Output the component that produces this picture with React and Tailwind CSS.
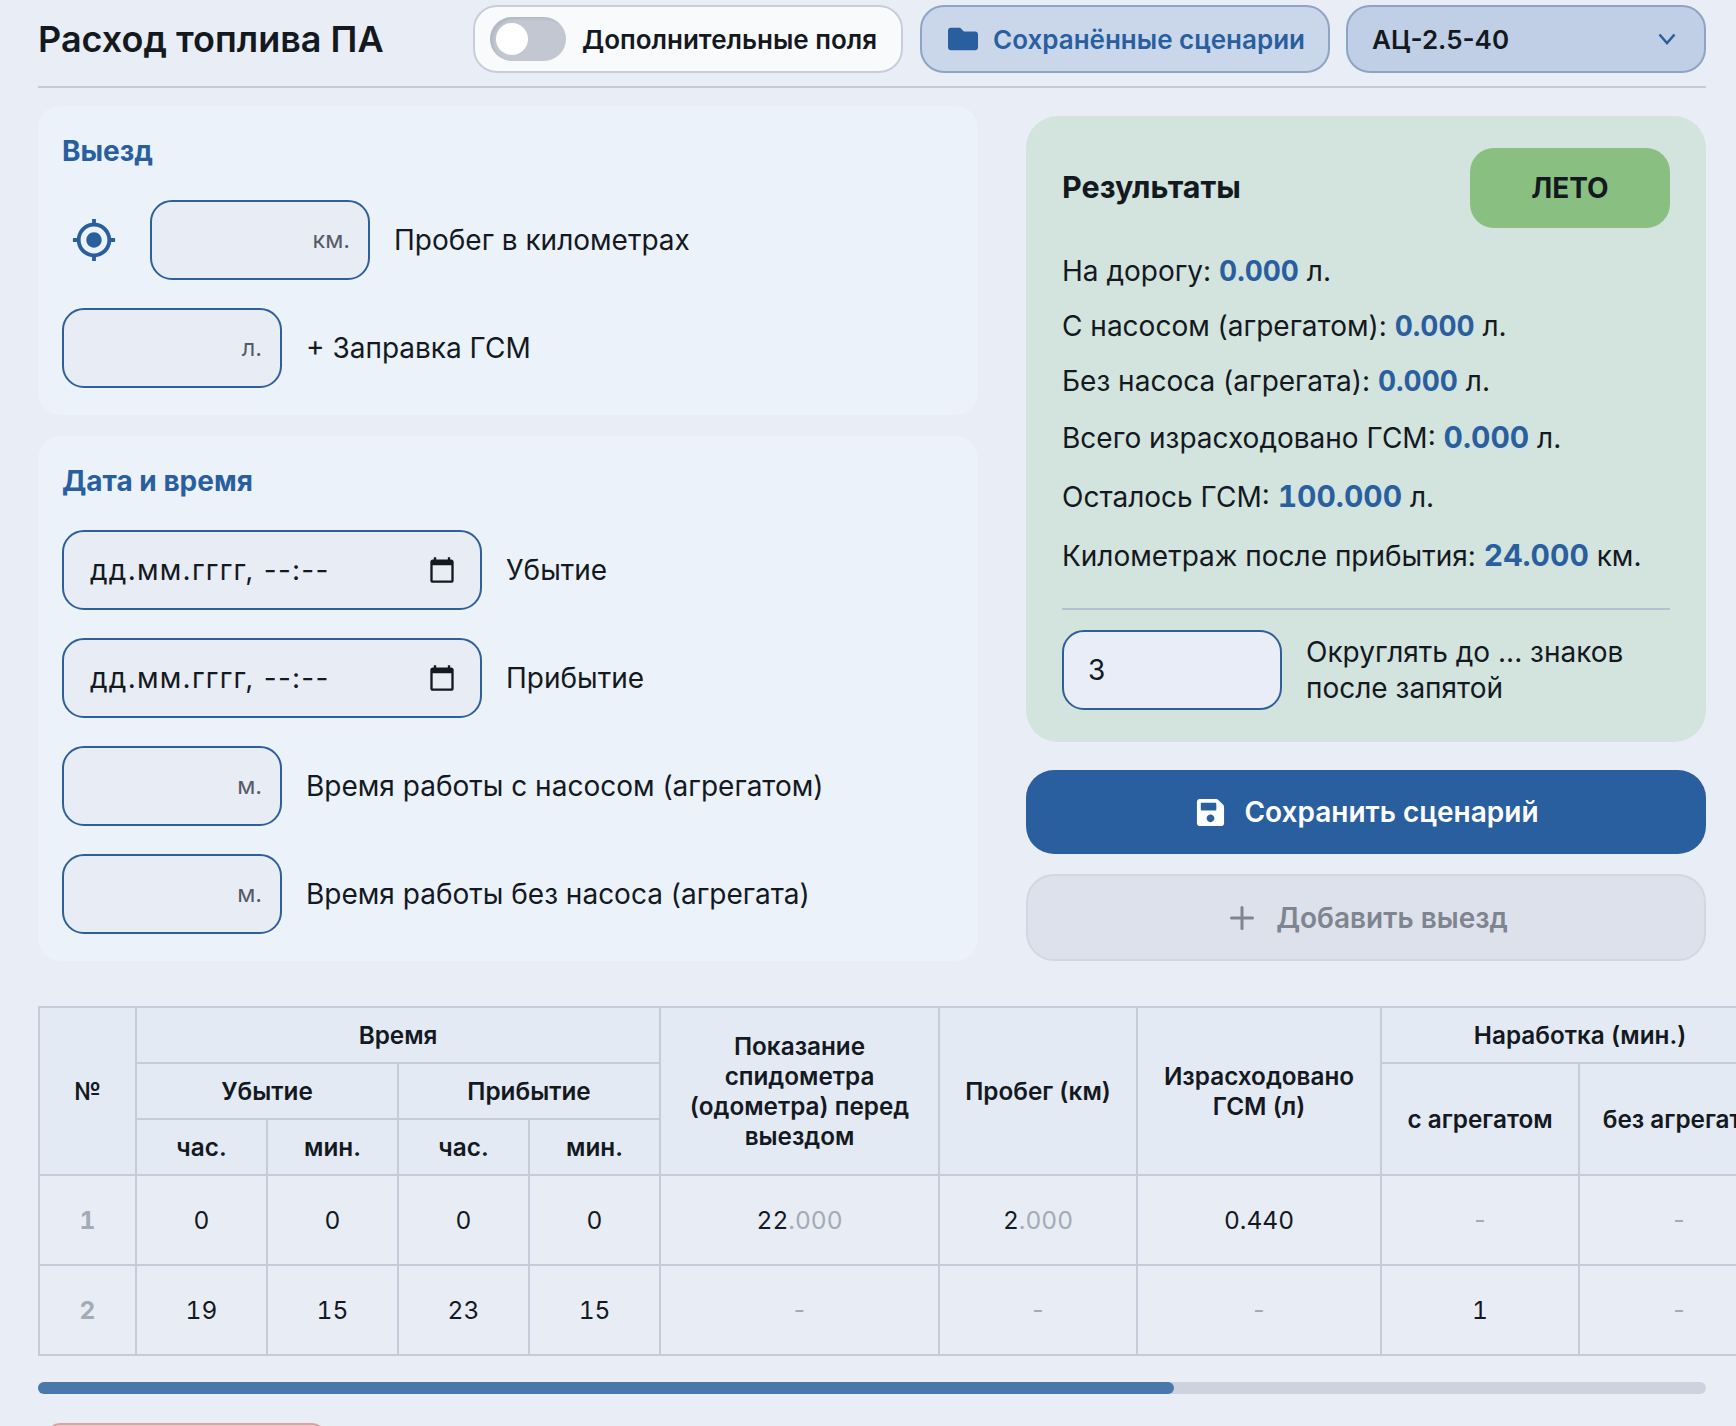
import { FaFolder, FaSave } from "react-icons/fa";
import { MdMyLocation } from "react-icons/md";
import { Plus } from "lucide-react";

const inputBox = "flex h-[80px] items-center rounded-[22px] border-2 border-[#2f5f98] bg-[#e8ecf4] pr-[18px]";

function UnitField({ unit, label }) {
  return (
    <div className="flex items-center gap-[24px]">
      <div className={`${inputBox} w-[220px] justify-end`}>
        <span className="text-[23.5px] text-[#555b66]">{unit}</span>
      </div>
      <span className="text-[28px]">{label}</span>
    </div>
  );
}

function DateField({ label }) {
  return (
    <div className="flex items-center gap-[24px]">
      <div className={`${inputBox} w-[420px] justify-between pl-[26px] pr-[24px]`}>
        <span className="text-[28px] tracking-[1.25px]">дд.мм.гггг, --:--</span>
        <svg width="28" height="28" viewBox="0 0 24 24" fill="#14191f">
          <path d="M20 3h-1V1h-2v2H7V1H5v2H4c-1.1 0-2 .9-2 2v16c0 1.1.9 2 2 2h16c1.1 0 2-.9 2-2V5c0-1.1-.9-2-2-2zm0 18H4V8h16v13z" />
        </svg>
      </div>
      <span className="text-[28px]">{label}</span>
    </div>
  );
}

function ResultRow({ label, value, unit, small, className }) {
  return (
    <p className={`text-[28px] leading-[36px] ${className}`}>
      {label}:{" "}
      <b className={small ? "text-[28px] font-bold leading-none text-[#2a5f9f] tabular-nums" : "text-[30px] font-bold leading-none text-[#2a5f9f] tabular-nums"}>
        {value}
      </b>{" "}
      {unit}
    </p>
  );
}

const th = "border-2 border-[#c5ccd9] bg-[#e3eaf4] px-2 pb-[1px] text-center align-middle text-[24.3px] font-semibold leading-[30px]";
const td = "border-2 border-[#c5ccd9] text-center align-middle text-[24.5px] tabular-nums";

function Dash() {
  return <span className="text-[#a4aab6]">-</span>;
}

function Decimal({ whole }) {
  return (
    <>
      {whole}
      <span className="text-[#a4aab6]">.000</span>
    </>
  );
}

function Row({ num, cells }) {
  return (
    <tr className="h-[90px]">
      <td className={`${td} font-bold text-[#a4aab6]`}>{num}</td>
      {cells.map((cell, i) => (
        <td key={i} className={td}>
          {cell}
        </td>
      ))}
    </tr>
  );
}

export default function App() {
  return (
    <div className="h-[1426px] overflow-hidden bg-[#e9edf5] font-['Inter',sans-serif] text-[#14191f]">
      <div className="pl-[38px] pr-[30px]">
        <header className="flex h-[88px] items-center border-b-2 border-[#c5cad5] pb-[12px] pt-[4px]">
          <h1 className="w-[435px] text-[36px] font-semibold">Расход топлива ПА</h1>
          <div className="flex h-[68px] w-[430px] items-center gap-[16px] rounded-[24px] border-2 border-[#c8ced9] bg-[#f9fafc] pl-[15px]">
            <span className="flex h-[44px] w-[76px] items-center rounded-full bg-[#c2c7d2] pl-[6px] shadow-[inset_3px_2px_3px_rgba(0,0,0,0.08)]">
              <span className="size-[32px] rounded-full bg-white" />
            </span>
            <span className="text-[26px] font-semibold">Дополнительные поля</span>
          </div>
          <button className="ml-[17px] flex h-[68px] w-[410px] items-center gap-[15px] whitespace-nowrap rounded-[24px] border-2 border-[#8da4c4] bg-[#cad7ea] pl-[26px] text-[26px] font-semibold text-[#2a5f9f]">
            <FaFolder size={30} />
            Сохранённые сценарии
          </button>
          <div className="ml-[16px] flex h-[68px] flex-1 items-center justify-between rounded-[24px] border-2 border-[#8da4c4] bg-[#c0cfe5] pl-[24px] pr-[28px] text-[26px] font-semibold">
            АЦ-2.5-40
            <svg width="18" height="12" viewBox="0 0 18 12" fill="none" stroke="#2a5f9f" strokeWidth="2.5">
              <path d="M1.5 1.5 9 10l7.5-8.5" />
            </svg>
          </div>
        </header>

        <div className="mt-[18px] flex gap-[48px]">
          <div className="flex w-[940px] flex-col gap-[21px]">
            <section className="flex h-[309px] flex-col rounded-[22px] bg-[#ecf2fa] px-[24px] pt-[27px]">
              <h2 className="text-[28px] font-bold leading-[36px] text-[#2a5f9f]">Выезд</h2>
              <div className="mt-[31px] flex items-center gap-[24px]">
                <div className="flex items-center gap-[33px] pl-[9px]">
                  <MdMyLocation size={46} className="text-[#2a5f9f]" />
                  <div className={`${inputBox} w-[220px] justify-end`}>
                    <span className="text-[23.5px] text-[#555b66]">км.</span>
                  </div>
                </div>
                <span className="text-[28px]">Пробег в километрах</span>
              </div>
              <div className="mt-[28px]">
                <UnitField unit="л." label="+ Заправка ГСМ" />
              </div>
            </section>
            <section className="flex h-[525px] flex-col gap-[28px] rounded-[22px] bg-[#ecf2fa] px-[24px] pt-[27px]">
              <h2 className="mb-[3px] text-[28px] font-bold leading-[36px] text-[#2a5f9f]">Дата и время</h2>
              <DateField label="Убытие" />
              <DateField label="Прибытие" />
              <UnitField unit="м." label="Время работы с насосом (агрегатом)" />
              <UnitField unit="м." label="Время работы без насоса (агрегата)" />
            </section>
          </div>

          <div className="mt-[10px] flex flex-1 flex-col">
            <section className="flex h-[626px] flex-col rounded-[32px] bg-[#d3e3dd] px-[36px] pt-[32px]">
              <div className="flex items-center justify-between">
                <h2 className="pb-[2px] text-[30.5px] font-bold">Результаты</h2>
                <span className="flex h-[80px] w-[200px] items-center justify-center rounded-[24px] bg-[#8abf82] text-[28px] font-bold">
                  ЛЕТО
                </span>
              </div>
              <ResultRow small className="mt-[25px]" label="На дорогу" value="0.000" unit="л." />
              <ResultRow small className="mt-[19px]" label="С насосом (агрегатом)" value="0.000" unit="л." />
              <ResultRow small className="mt-[19px]" label="Без насоса (агрегата)" value="0.000" unit="л." />
              <ResultRow className="mt-[21px]" label="Всего израсходовано ГСМ" value="0.000" unit="л." />
              <ResultRow className="mt-[23px]" label="Осталось ГСМ" value="100.000" unit="л." />
              <ResultRow className="mt-[23px]" label="Километраж после прибытия" value="24.000" unit="км." />
              <div className="mt-[34px] flex items-center gap-[24px] border-t-2 border-[#b1c2cf] pt-[20px]">
                <div className={`${inputBox} w-[220px] bg-[#e8edf7] pl-[24px]`}>
                  <span className="text-[28px]">3</span>
                </div>
                <span className="w-[340px] text-[28px] leading-[36px]">Округлять до ... знаков после запятой</span>
              </div>
            </section>
            <button className="mt-[28px] flex h-[84px] items-center justify-center gap-[18px] rounded-[28px] bg-[#2a5f9f] pl-[2px] text-[28px] font-semibold text-white">
              <FaSave size={31} />
              Сохранить сценарий
            </button>
            <button className="mt-[20px] flex h-[87px] items-center justify-center gap-[16px] rounded-[28px] border-2 border-[#d2d7e1] bg-[#dde1eb] text-[28px] font-semibold text-[#7f8590]">
              <Plus size={36} />
              Добавить выезд
            </button>
          </div>
        </div>
      </div>

      <div className="ml-[38px] mt-[45px] overflow-hidden">
        <table className="w-[1740px] table-fixed border-collapse bg-[#e8ecf5]">
          <colgroup>
            <col className="w-[97px]" />
            <col className="w-[131px]" />
            <col className="w-[131px]" />
            <col className="w-[131px]" />
            <col className="w-[131px]" />
            <col className="w-[279px]" />
            <col className="w-[198px]" />
            <col className="w-[244px]" />
            <col className="w-[198px]" />
            <col className="w-[200px]" />
          </colgroup>
          <thead>
            <tr className="h-[56px]">
              <th rowSpan={3} className={th}>№</th>
              <th colSpan={4} className={th}>Время</th>
              <th rowSpan={3} className={th}>Показание спидометра (одометра) перед выездом</th>
              <th rowSpan={3} className={th}>Пробег (км)</th>
              <th rowSpan={3} className={th}>Израсходовано ГСМ (л)</th>
              <th colSpan={2} className={th}>Наработка (мин.)</th>
            </tr>
            <tr className="h-[56px]">
              <th colSpan={2} className={th}>Убытие</th>
              <th colSpan={2} className={th}>Прибытие</th>
              <th rowSpan={2} className={th}>с агрегатом</th>
              <th rowSpan={2} className={`${th} whitespace-nowrap`}>без агрегата</th>
            </tr>
            <tr className="h-[56px]">
              <th className={th}>час.</th>
              <th className={th}>мин.</th>
              <th className={th}>час.</th>
              <th className={th}>мин.</th>
            </tr>
          </thead>
          <tbody>
            <Row num="1" cells={["0", "0", "0", "0", <Decimal whole="22" />, <Decimal whole="2" />, "0.440", <Dash />, <Dash />]} />
            <Row num="2" cells={["19", "15", "23", "15", <Dash />, <Dash />, <Dash />, "1", <Dash />]} />
          </tbody>
        </table>
      </div>

      {/* scrollbar of the table */}
      <div className="ml-[38px] mr-[30px] mt-[26px] h-[12px] rounded-full bg-[#ccd3de]">
        <div className="h-full w-[1136px] rounded-full bg-[#4b77ab]" />
      </div>

      <div className="ml-[46px] mt-[29px] h-[30px] w-[280px] rounded-t-[14px] border-2 border-[#d4a5a5] bg-[#eccaca]" />
    </div>
  );
}
